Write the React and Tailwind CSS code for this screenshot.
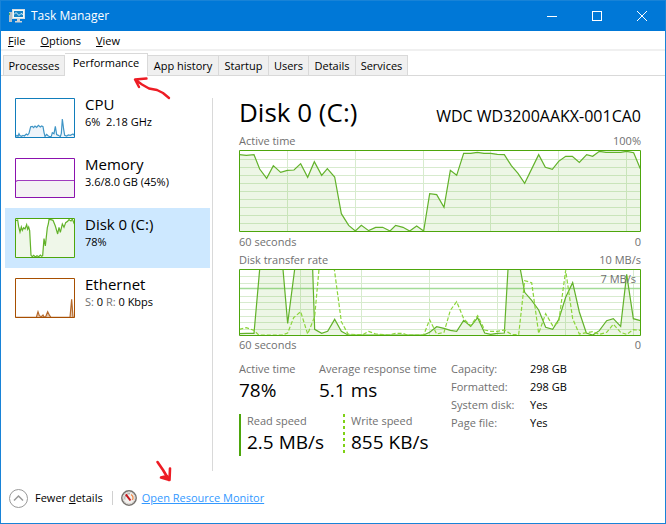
import React from "react";

const DISK_ACTIVE =
  "1,14 22,16 45,14 62,57 83,85 103,47 125,67 145,61 165,60 185,41 206,82 226,35 248,76 265,56 287,81 307,191 329,226 349,243 367,226 389,242 410,232 431,232 453,243 470,226 492,232 512,243 533,228 554,243 572,131 593,134 615,172 634,61 653,76 674,10 695,10 715,7 735,10 755,10 775,13 796,14 817,47 837,70 857,100 899,14 919,52 940,58 959,34 980,19 1000,19 1021,37 1043,14 1061,19 1081,4 1101,7 1121,7 1145,7 1163,4 1184,8 1204,56";

const DISK_READ =
  "1,194 22,193 45,193 62,1 132,1 146,163 167,1 221,1 227,181 248,193 266,187 287,151 307,187 327,198 554,198 572,190 593,173 615,178 634,184 653,187 674,154 695,172 716,146 737,192 755,196 775,193 796,192 807,1 844,1 857,70 878,94 899,123 920,175 941,181 959,152 980,85 1001,41 1021,129 1042,192 1061,198 1081,185 1103,155 1123,149 1145,172 1163,16 1183,149 1204,155";

const DISK_WRITE =
  "1,181 22,176 45,184 59,198 129,198 146,192 164,146 185,128 206,195 227,143 240,1 286,1 307,158 327,195 369,198 389,187 410,195 449,198 469,193 492,193 504,198 554,198 572,152 593,195 615,190 634,124 653,98 674,149 695,170 716,140 737,183 755,187 775,187 796,183 819,197 839,197 857,35 878,41 899,193 920,134 941,170 959,160 980,4 1001,149 1021,195 1042,191 1061,188 1081,196 1103,190 1123,166 1145,190 1163,196 1183,182 1204,184";

const CPU =
  "2,116 6,112 9,115 12,107 15,113 20,115 24,112 28,114 34,108 38,111 42,106 47,86 52,85 56,89 60,84 65,88 70,82 76,87 80,84 84,86 87,103 90,115 95,109 99,113 104,116 109,115 112,104 117,107 121,85 125,110 130,112 136,116 139,106 142,63 146,94 149,112 155,114 160,111 166,112 174,108 178,112";

const DISK_SMALL =
  "2,8 8,6 11,26 15,42 19,27 22,37 26,29 30,33 35,20 38,34 41,27 44,38 48,112 52,116 56,112 61,117 66,113 71,116 76,111 80,115 83,113 87,62 91,84 97,29 100,18 102,5 108,5 114,7 121,24 128,48 132,28 136,43 142,18 147,28 152,14 158,10 162,5 168,9 172,3 178,18";

const ETHERNET =
  "2,118 64,118 69,101 73,113 79,116 84,111 87,117 92,116 98,101 104,113 108,118 165,118 170,64 174,117 178,118";

function Chart({ width, height, className, line, fill, children, label }) {
  return (
    <svg
      role="img"
      aria-label={label}
      viewBox={`0 0 ${width} ${height}`}
      preserveAspectRatio="none"
      className={"block " + className}
    >
      <rect width={width} height={height} fill={fill} />
      {children}
      <rect
        x="1.5"
        y="1.5"
        width={width - 3}
        height={height - 3}
        fill="none"
        stroke={line}
        vectorEffect="non-scaling-stroke"
      />
    </svg>
  );
}

function Series({ points, height, stroke, fill, dash }) {
  const first = points.split(" ")[0].split(",")[0];
  const last = points.split(" ").pop().split(",")[0];
  return (
    <>
      {fill && (
        <polygon
          points={`${first},${height - 2} ${points} ${last},${height - 2}`}
          fill={fill}
        />
      )}
      <polyline
        points={points}
        fill="none"
        stroke={stroke}
        strokeWidth="1.2"
        strokeDasharray={dash}
        vectorEffect="non-scaling-stroke"
      />
    </>
  );
}

function Grid({ width, height, xs, ys }) {
  return (
    <g stroke="#d7ebce">
      {xs.map((x) => (
        <line key={x} x1={x} x2={x} y1="0" y2={height} vectorEffect="non-scaling-stroke" />
      ))}
      {ys.map((y) => (
        <line key={y} x1="0" x2={width} y1={y} y2={y} vectorEffect="non-scaling-stroke" />
      ))}
    </g>
  );
}

function TabButton({ children, active, className }) {
  return (
    <button
      role="tab"
      aria-selected={!!active}
      className={
        "text-center whitespace-nowrap border-t border-r border-[#d9d9d9] " +
        (active
          ? "h-[23px] bg-white pb-1 leading-[18px] "
          : "h-[20px] bg-[#f0f0f0] leading-[19px] border-b-0 mb-px ") +
        className
      }
    >
      {children}
    </button>
  );
}

function Resource({ name, detail, active, children }) {
  return (
    <button
      className={
        "flex h-[60px] w-[205px] items-start gap-[10px] px-[10px] pt-[10px] text-left " +
        (active ? "bg-[#cde8ff]" : "")
      }
    >
      {children}
      <span className="block">
        <span className="-mt-1 block text-[15px] leading-[20px]">{name}</span>
        <span className="block leading-[15px]">{detail}</span>
      </span>
    </button>
  );
}

function Row({ left, right, className }) {
  return (
    <div className={"flex justify-between text-[#707070] " + className}>
      <span>{left}</span>
      <span>{right}</span>
    </div>
  );
}

function Stat({ label, value, className }) {
  return (
    <div className={"whitespace-nowrap " + className}>
      <div className="leading-[14px] text-[#707070]">{label}</div>
      <div className="text-[19px] leading-[28px]">{value}</div>
    </div>
  );
}

const SPECS = [
  ["Capacity:", "298 GB"],
  ["Formatted:", "298 GB"],
  ["System disk:", "Yes"],
  ["Page file:", "Yes"],
];

export default function App() {
  return (
    <div className="relative flex min-h-screen flex-col border border-[#1883d7] bg-white font-['Open_Sans','Noto_Sans',sans-serif] text-[11px] text-black">
      <header className="flex h-[30px] items-center bg-[#0078d7] pl-2 text-white">
        <svg width="16" height="16" viewBox="0 0 16 16" aria-hidden="true">
          <rect x="0" y="4" width="3" height="10" fill="#b8c0c6" />
          <rect x="0" y="5" width="1" height="2" fill="#46b450" />
          <rect x="3" y="1" width="13" height="10" fill="#d5dde1" />
          <rect x="4" y="2" width="11" height="8" fill="#f2f8fa" />
          <rect x="5" y="3" width="9" height="6" fill="#1583c5" />
          <path d="M5 6.500L7 4.500L10 7.500L12 5.500L14 6.500" fill="none" stroke="#e6f6ff" />
          <path d="M8 11h3v2h2v1.500H6V13h2z" fill="#cfd3d6" />
        </svg>
        <h1 className="ml-[6px] flex-1 text-[12px] leading-[18px]">Task Manager</h1>
        <button aria-label="Minimize" className="flex h-full w-[45px] items-center justify-center">
          <svg width="10" height="10" viewBox="0 0 10 10" stroke="#fff">
            <path d="M0 5.500h10" />
          </svg>
        </button>
        <button aria-label="Maximize" className="flex h-full w-[45px] items-center justify-center">
          <svg width="10" height="10" viewBox="0 0 10 10" stroke="#fff" fill="none">
            <rect x="0.5" y="0.5" width="9" height="9" />
          </svg>
        </button>
        <button aria-label="Close" className="flex h-full w-[46px] items-center justify-center">
          <svg width="10" height="10" viewBox="0 0 10 10" stroke="#fff">
            <path d="M0 0L10 10M10 0L0 10" />
          </svg>
        </button>
      </header>

      <nav className="flex h-[20px] gap-[15px] border-b-2 border-[#f0f0f0] pl-[7px] leading-[19px]">
        <button><u>F</u>ile</button>
        <button><u>O</u>ptions</button>
        <button><u>V</u>iew</button>
      </nav>

      <div role="tablist" className="flex h-[25px] items-end pl-[2px] shadow-[inset_0_-1px_0_#d9d9d9]">
        <TabButton className="w-[62px] border-l">Processes</TabButton>
        <TabButton active className="w-[83px]">Performance</TabButton>
        <TabButton className="w-[71px]">App history</TabButton>
        <TabButton className="w-[50px]">Startup</TabButton>
        <TabButton className="w-[40px]">Users</TabButton>
        <TabButton className="w-[47px]">Details</TabButton>
        <TabButton className="w-[52px]">Services</TabButton>
      </div>

      <main className="flex flex-1 pt-[12px] pb-[2px]">
        <aside className="w-[211px] shrink-0 pl-1">
          <Resource name="CPU" detail={"6%\u00a0 2.18 GHz"}>
            <Chart label="CPU" width={180} height={120} className="h-[40px] w-[60px]" line="#117dbb" fill="#fff">
              <Series points={CPU} height={120} stroke="#3f95c6" fill="#eef4fa" />
            </Chart>
          </Resource>
          <Resource name="Memory" detail="3.6/8.0 GB (45%)">
            <Chart label="Memory" width={180} height={120} className="h-[40px] w-[60px]" line="#8b12ae" fill="#fff">
              <Series points="2,70 8,67.5 178,67.5" height={120} stroke="#a03cbf" fill="#f4f2f4" />
            </Chart>
          </Resource>
          <Resource active name="Disk 0 (C:)" detail="78%">
            <Chart label="Disk" width={180} height={120} className="h-[40px] w-[60px]" line="#4da60c" fill="#fff">
              <Series points={DISK_SMALL} height={120} stroke="#62b22a" fill="#eff7e9" />
            </Chart>
          </Resource>
          <Resource
            name="Ethernet"
            detail={
              <>
                <span className="text-[#707070]">S:</span> 0 <span className="text-[#707070]">R:</span> 0 Kbps
              </>
            }
          >
            <Chart label="Ethernet" width={180} height={120} className="h-[40px] w-[60px]" line="#a74f01" fill="#fff">
              <Series points={ETHERNET} height={120} stroke="#b56a2c" fill="#e3c6ae" />
            </Chart>
          </Resource>
        </aside>

        <section className="mt-[10px] flex-1 border-l border-[#d9d9d9] pr-[24px] pl-[26px]">
          <div className="-mt-[3px] flex items-baseline justify-between pb-[3px] whitespace-nowrap">
            <h2 className="text-[26px] leading-[34px]">Disk 0 (C:)</h2>
            <span className="text-[16px]">WDC WD3200AAKX-001CA0</span>
          </div>

          <Row left="Active time" right="100%" className="pt-[1px] pb-[1px] leading-[16px]" />
          <Chart label="Active time" width={1206} height={246} className="h-[82px] w-full" line="#4da60c" fill="#fff">
            <Grid
              width={1206}
              height={246}
              xs={[145.5, 349.5, 553.5, 754.5, 958.5, 1162.5]}
              ys={[28.5, 52.5, 76.5, 100.5, 124.5, 148.5, 172.5, 196.5, 220.5]}
            />
            <Series points={DISK_ACTIVE} height={246} stroke="#62b22a" fill="#4da60c1a" />
          </Chart>
          <Row left="60 seconds" right="0" className="pt-[1px] leading-[18px]" />

          <Row left="Disk transfer rate" right="10 MB/s" className="leading-[18px]" />
          <div className="relative">
            <Chart label="Disk transfer rate" width={1206} height={201} className="h-[67px] w-full" line="#4da60c" fill="#fff">
              <Grid
                width={1206}
                height={201}
                xs={[184.5, 367.5, 571.5, 775.5, 979.5, 1183.5]}
                ys={[22.5, 43.5, 82.5, 100.5, 121.5, 142.5, 160.5, 181.5]}
              />
              <line x1="0" x2="1206" y1="58.5" y2="58.5" stroke="#a3dc98" strokeWidth="1.4" vectorEffect="non-scaling-stroke" />
              <Series points={DISK_READ} height={201} stroke="#62b22a" fill="#4da60c1a" />
              <Series points={DISK_WRITE} height={201} stroke="#8bd53a" dash="4 2" />
            </Chart>
            <span className="absolute top-[2px] right-[5px] leading-[16px] text-[#707070]">7 MB/s</span>
          </div>
          <Row left="60 seconds" right="0" className="leading-[18px]" />

          <div className="mt-[6px] flex">
            <div className="w-[212px] shrink-0 pt-[2px]">
              <div className="flex">
                <Stat label="Active time" value="78%" className="w-[80px]" />
                <Stat label="Average response time" value="5.1 ms" className="" />
              </div>
              <div className="mt-[10px] flex">
                <Stat label="Read speed" value="2.5 MB/s" className="w-[104px] border-l-2 border-[#4da60c] pl-[6px]" />
                <div className="flex gap-[6px]">
                  <svg width="2" height="42" viewBox="0 0 2 42" aria-hidden="true">
                    <path d="M1 0V42" stroke="#7fd116" strokeWidth="2" strokeDasharray="3 3" />
                  </svg>
                  <Stat label="Write speed" value="855 KB/s" className="" />
                </div>
              </div>
            </div>
            <table className="self-start whitespace-nowrap text-left leading-[18px]">
              <tbody className="align-top">
                {SPECS.map(([name, value]) => (
                  <tr key={name}>
                    <th className="w-[79px] p-0 font-normal text-[#707070]">{name}</th>
                    <td className="p-0">{value}</td>
                  </tr>
                ))}
              </tbody>
            </table>
          </div>
        </section>
      </main>

      <footer className="flex h-[50px] items-center pl-[7px]">
        <button className="flex items-center gap-[6px] leading-[18px]">
          <svg width="21" height="21" viewBox="0 0 21 21" fill="none" aria-hidden="true">
            <circle cx="10.5" cy="10.5" r="9" stroke="#999" />
            <path d="M6 12.500L10.500 8L15 12.500" stroke="#999" strokeWidth="1.5" />
          </svg>
          <span>Fewer <u>d</u>etails</span>
        </button>
        <span className="mr-[8px] ml-[9px] h-[14px] w-px bg-[#d0d0d0]" />
        <svg width="16" height="16" viewBox="0 0 16 16" fill="none" aria-hidden="true">
          <circle cx="8" cy="8" r="7.2" fill="#f2f0ed" stroke="#77736f" strokeWidth="1.5" />
          <circle cx="8" cy="8" r="5.8" stroke="#d8d5d1" />
          <path d="M4 9.500A4.400 4.400 0 0 1 9 3.800" stroke="#9a9a9a" />
          <path d="M10 4.500A4.400 4.400 0 0 1 11.500 10" stroke="#ef8a4a" strokeWidth="1.3" />
          <path d="M4.800 4.300L9.500 10.500" stroke="#c5161d" strokeWidth="2" />
        </svg>
        <a href="#resource-monitor" className="ml-[5px] leading-[18px] text-[#3399ff] underline">Open Resource Monitor</a>
      </footer>

      <svg className="pointer-events-none absolute top-[75px] left-[130px]" width="44" height="27" viewBox="131 76 44 27" fill="none" stroke="#ed1c24" strokeWidth="2.4" strokeLinecap="round" strokeLinejoin="round" aria-hidden="true">
        <path d="M146.500 78.500L135 79.500L139 87M135 79.500L142 84.500L149 88.500L157 90L163 93L169 98" />
      </svg>
      <svg className="pointer-events-none absolute bottom-[40px] left-[152px]" width="24" height="24" viewBox="153 459 24 24" fill="none" stroke="#ed1c24" strokeWidth="2.6" strokeLinecap="round" strokeLinejoin="round" aria-hidden="true">
        <path d="M157.500 462L163 470L169 480M170 468.500L169.500 480L161 477.500L167 476" />
      </svg>
    </div>
  );
}
